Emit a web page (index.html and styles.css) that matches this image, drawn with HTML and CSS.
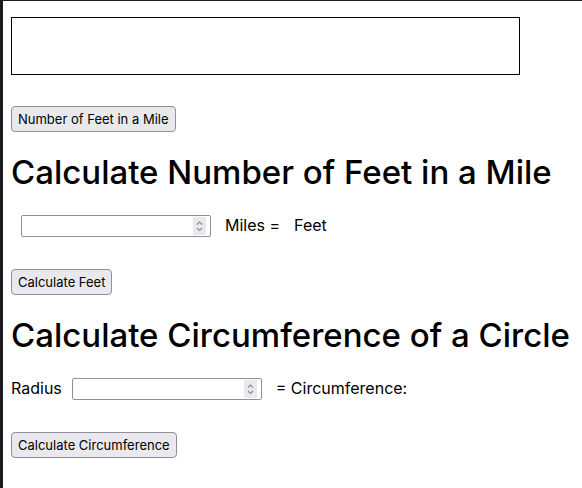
FILE: index.html
```html
<!DOCTYPE html>
<html lang="en">
<head>
<meta charset="utf-8">
<title>Calculators</title>
<link rel="stylesheet" href="styles.css">
</head>
<body>
<div class="display"></div>
<button class="btn btn-first" type="button">Number of Feet in a Mile</button>

<h1 class="title">Calculate Number of Feet in a Mile</h1>
<div class="row">
  <span class="num num-indent">
    <input class="num-input" type="number">
    <span class="spin" aria-hidden="true">
      <svg width="13" height="18" viewBox="0 0 13 18"><path d="M4 7.5 L6.5 5 L9 7.5" fill="none" stroke="#8c8c94" stroke-width="1.1"/><path d="M4 11 L6.5 13.5 L9 11" fill="none" stroke="#8c8c94" stroke-width="1.1"/></svg>
    </span>
  </span>
  <span class="lbl lbl-after">Miles =</span>
  <span class="lbl lbl-result">Feet</span>
</div>
<button class="btn btn-next" type="button">Calculate Feet</button>

<h1 class="title">Calculate Circumference of a Circle</h1>
<div class="row">
  <span class="lbl">Radius</span>
  <span class="num num-after-label">
    <input class="num-input" type="number">
    <span class="spin" aria-hidden="true">
      <svg width="13" height="18" viewBox="0 0 13 18"><path d="M4 7.5 L6.5 5 L9 7.5" fill="none" stroke="#8c8c94" stroke-width="1.1"/><path d="M4 11 L6.5 13.5 L9 11" fill="none" stroke="#8c8c94" stroke-width="1.1"/></svg>
    </span>
  </span>
  <span class="lbl lbl-after">= Circumference:</span>
</div>
<button class="btn btn-next" type="button">Calculate Circumference</button>
</body>
</html>
```
FILE: styles.css
```css
html {
  min-height: 100vh;
  box-sizing: border-box;
  border-left: 3px solid #1c1b22;
  border-top: 1px solid #1c1b22;
  background: #ffffff;
}

body {
  margin: 0;
  padding: 8px;
  font-family: "Inter", "Open Sans", sans-serif;
  font-size: 16px;
  color: #000000;
  display: flex;
  flex-direction: column;
  align-items: flex-start;
}

.display {
  margin-top: 8px;
  width: 509px;
  height: 58px;
  box-sizing: border-box;
  border: 1px solid #000000;
}

.btn {
  font-family: "Inter", "Open Sans", sans-serif;
  font-size: 13px;
  line-height: 16px;
  height: 26px;
  padding: 4px 6px;
  box-sizing: border-box;
  color: #000000;
  background: #e9e9ed;
  border: 1px solid #8f8f9d;
  border-radius: 4px;
}

.btn-first {
  margin-top: 31px;
}

.btn-next {
  margin-top: 32px;
}

.title {
  margin: 20px 0 0;
  font-size: 33px;
  font-weight: 500;
  line-height: 40px;
}

.row {
  margin-top: 23px;
  display: flex;
  align-items: center;
  height: 22px;
}

.lbl {
  line-height: 20px;
  padding-bottom: 3px;
  white-space: pre;
}

.lbl-after {
  margin-left: 14px;
}

.lbl-result {
  margin-left: 14px;
}

.num {
  position: relative;
  display: block;
  width: 190px;
  height: 22px;
}

.num-indent {
  margin-left: 10px;
}

.num-after-label {
  margin-left: 10px;
}

.num-input {
  display: block;
  width: 190px;
  height: 22px;
  box-sizing: border-box;
  margin: 0;
  padding: 1px 4px;
  border: 1px solid #8f8f9d;
  border-radius: 2px;
  background: #ffffff;
  font-family: "Inter", sans-serif;
  font-size: 13px;
  -moz-appearance: textfield;
}

.num-input::-webkit-inner-spin-button,
.num-input::-webkit-outer-spin-button {
  -webkit-appearance: none;
  margin: 0;
}

.spin {
  position: absolute;
  top: 2px;
  right: 5px;
  width: 13px;
  height: 18px;
  background: #e9e9ed;
  pointer-events: none;
}

.spin svg {
  display: block;
}
```
